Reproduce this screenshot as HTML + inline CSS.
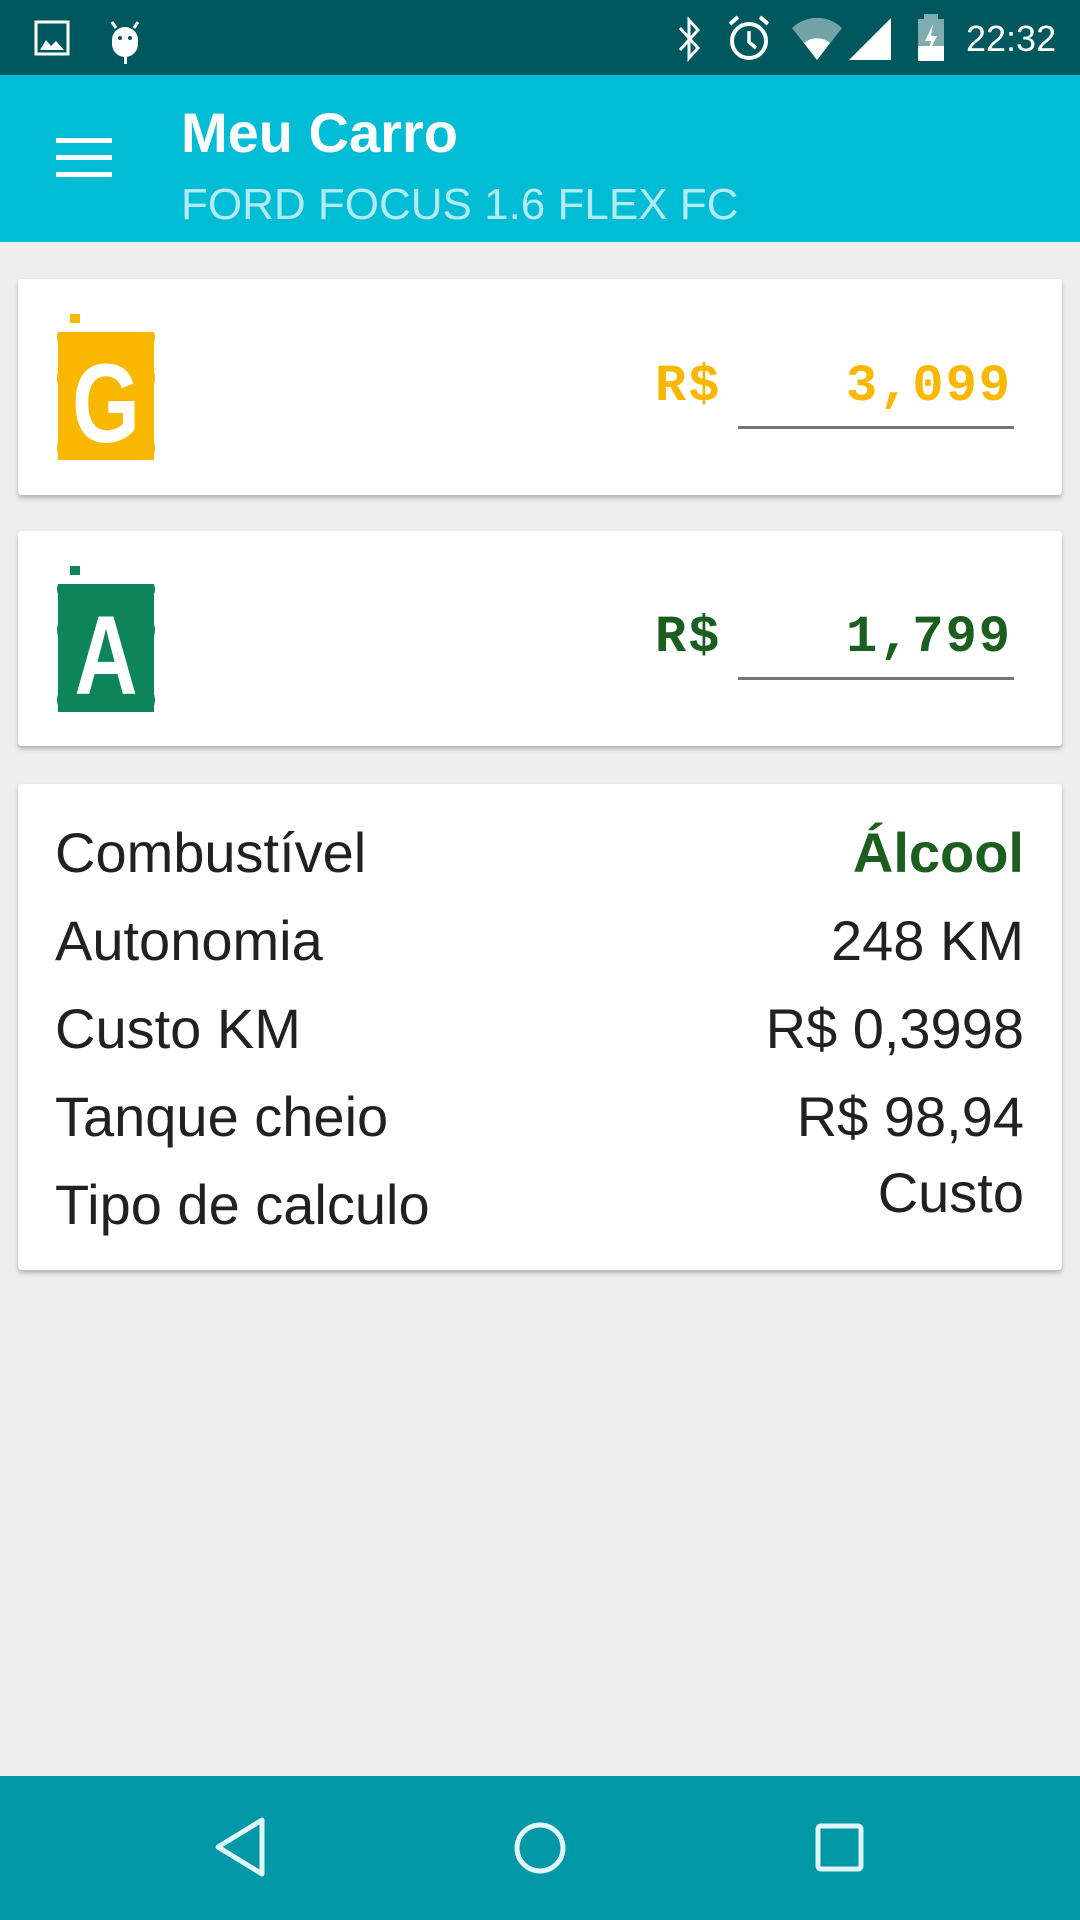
<!DOCTYPE html>
<html><head><meta charset="utf-8"><style>
*{margin:0;padding:0;box-sizing:border-box}
body{width:1080px;height:1920px;background:#eeeeee;font-family:"Liberation Sans",sans-serif;position:relative;overflow:hidden}
.abs{position:absolute}
.sb{left:0;top:0;width:1080px;height:75px;background:#00585f}
.tb{left:0;top:75px;width:1080px;height:167px;background:#00bcd4}
.card{background:#fff;border-radius:4px;box-shadow:0 3px 5px rgba(0,0,0,.25)}
.row{position:absolute;left:55px;width:969px;font-size:56px;color:#212121;line-height:1}
.row .r{position:absolute;right:0;top:0}
.seg{font-family:"Liberation Mono",monospace;font-size:52px;letter-spacing:2px;font-weight:bold}
.nav{left:0;top:1776px;width:1080px;height:144px;background:#0097a7}
</style></head><body>
<div class="abs sb"></div>
<svg class="abs" style="left:34px;top:20px" width="40" height="36"><rect x="2" y="2" width="32" height="32" fill="none" stroke="#fff" stroke-width="3"/><path d="M6 30 L12 20 L17 26 L22 21 L30 30 Z" fill="#fff"/></svg>
<svg class="abs" style="left:108px;top:14px" width="36" height="50"><path d="M4 8 L8 14 M30 8 L26 14" stroke="#fff" stroke-width="3"/><path d="M4 26 A13 13 0 0 1 30 26 L30 30 A13 13 0 0 1 4 30 Z" fill="#fff"/><rect x="16" y="40" width="3" height="12" fill="#fff"/><circle cx="12" cy="24" r="2" fill="#00585f"/><circle cx="22" cy="24" r="2" fill="#00585f"/></svg>
<svg class="abs" style="left:674px;top:16px" width="30" height="46"><path d="M6 12 L24 32 L15 42 L15 4 L24 14 L6 34" fill="none" stroke="#fff" stroke-width="3"/></svg>
<svg class="abs" style="left:726px;top:14px" width="46" height="48"><circle cx="23" cy="27" r="17" fill="none" stroke="#fff" stroke-width="4"/><path d="M23 17 L23 28 L30 34" fill="none" stroke="#fff" stroke-width="3.5"/><path d="M4 10 L12 3 M42 10 L34 3" stroke="#fff" stroke-width="4"/></svg>
<svg class="abs" style="left:790px;top:16px" width="54" height="46"><path d="M2 12 A36 36 0 0 1 52 12 L27 44 Z" fill="#fff" opacity=".45"/><path d="M14 27 A20 20 0 0 1 40 27 L27 44 Z" fill="#fff"/></svg>
<svg class="abs" style="left:849px;top:16px" width="44" height="46"><path d="M42 2 L42 44 L0 44 Z" fill="#fff"/></svg>
<svg class="abs" style="left:916px;top:14px" width="30" height="48"><rect x="8" y="0" width="14" height="5" fill="#fff" opacity=".5"/><rect x="2" y="5" width="26" height="42" fill="#fff" opacity=".5"/><rect x="2" y="32" width="26" height="15" fill="#fff"/><path d="M17 10 L9 27 L15 27 L12 40 L21 22 L15 22 Z" fill="#fff"/></svg>
<div class="abs" style="left:966px;top:18px;font-size:36px;color:#fff">22:32</div>

<div class="abs tb"></div>
<div class="abs" style="left:56px;top:138px;width:56px;height:5px;background:#fff"></div>
<div class="abs" style="left:56px;top:155px;width:56px;height:5px;background:#fff"></div>
<div class="abs" style="left:56px;top:172px;width:56px;height:5px;background:#fff"></div>
<div class="abs" style="left:181px;top:100px;font-size:56px;color:#fff;font-weight:bold">Meu Carro</div>
<div class="abs" style="left:181px;top:180px;font-size:44px;color:#b2ebf2">FORD FOCUS 1.6 FLEX FC</div>

<div class="abs card" style="left:18px;top:279px;width:1044px;height:216px"></div>
<svg class="abs" style="left:54px;top:314px" width="104" height="146"><rect x="16" y="0" width="10" height="9" fill="#f9b700"/><path d="M4 18 H100 Q102 24 100 28 V58 Q102 64 100 70 V128 Q102 134 100 140 V146 H4 V140 Q2 134 4 128 V70 Q2 64 4 58 V28 Q2 24 4 18 Z" fill="#f9b700"/><text x="0" y="0" transform="translate(52 128) scale(0.78 1)" font-family="Liberation Sans" font-weight="bold" font-size="112" fill="#fff" text-anchor="middle">G</text></svg>
<div class="abs seg" style="left:655px;top:357px;color:#f9b700">R$</div>
<div class="abs seg" style="left:738px;width:274px;text-align:right;top:357px;color:#f9b700">3,099</div>
<div class="abs" style="left:738px;top:426px;width:276px;height:3px;background:#757575"></div>

<div class="abs card" style="left:18px;top:531px;width:1044px;height:215px"></div>
<svg class="abs" style="left:54px;top:566px" width="104" height="146"><rect x="16" y="0" width="10" height="9" fill="#0d845a"/><path d="M4 18 H100 Q102 24 100 28 V58 Q102 64 100 70 V128 Q102 134 100 140 V146 H4 V140 Q2 134 4 128 V70 Q2 64 4 58 V28 Q2 24 4 18 Z" fill="#0d845a"/><text x="0" y="0" transform="translate(52 128) scale(0.78 1)" font-family="Liberation Sans" font-weight="bold" font-size="112" fill="#fff" text-anchor="middle">A</text></svg>
<div class="abs seg" style="left:655px;top:608px;color:#1b5e20">R$</div>
<div class="abs seg" style="left:738px;width:274px;text-align:right;top:608px;color:#1b5e20">1,799</div>
<div class="abs" style="left:738px;top:677px;width:276px;height:3px;background:#757575"></div>

<div class="abs card" style="left:18px;top:784px;width:1044px;height:486px"></div>
<div class="row" style="top:825px">Combustível<span class="r" style="color:#1b5e20;font-weight:bold">Álcool</span></div>
<div class="row" style="top:913px">Autonomia<span class="r">248 KM</span></div>
<div class="row" style="top:1001px">Custo KM<span class="r">R$ 0,3998</span></div>
<div class="row" style="top:1089px">Tanque cheio<span class="r">R$ 98,94</span></div>
<div class="row" style="top:1177px">Tipo de calculo<span class="r" style="top:-12px">Custo</span></div>

<div class="abs nav"></div>
<svg class="abs" style="left:210px;top:1816px" width="60" height="64"><path d="M52 4 L52 58 L8 31 Z" fill="none" stroke="#e0f7fa" stroke-width="5" stroke-linejoin="round"/></svg>
<svg class="abs" style="left:512px;top:1820px" width="56" height="56"><circle cx="28" cy="28" r="23" fill="none" stroke="#e0f7fa" stroke-width="5"/></svg>
<svg class="abs" style="left:814px;top:1822px" width="52" height="52"><rect x="4" y="4" width="43" height="43" rx="3" fill="none" stroke="#e0f7fa" stroke-width="5"/></svg>
</body></html>
